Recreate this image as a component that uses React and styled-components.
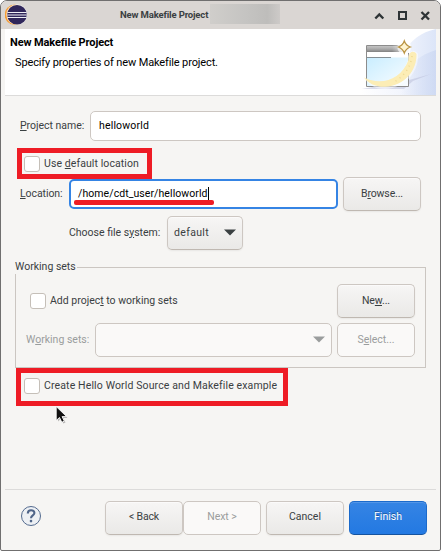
import React from "react";
import styled, { createGlobalStyle, css } from "styled-components";

const Global = createGlobalStyle`
  *, *::before, *::after { box-sizing: border-box; }
  html, body { margin: 0; height: 551px; overflow: hidden; background: #fff; }
  #root { height: 551px; }
`;

const Window = styled.main`
  position: relative;
  display: flex;
  flex-direction: column;
  width: 441px;
  height: 551px;
  border: 1px solid #706f6f;
  border-radius: 7px 7px 2px 2px;
  background: #f6f5f3;
  color: #3a4042;
  overflow: hidden;
  font: 10.5px/14px Roboto, sans-serif;
`;

const Text = styled.span`
  display: inline-block;
  white-space: nowrap;
  letter-spacing: ${(p) => p.$track ?? 0}px;
`;

const Key = styled.span`
  text-decoration: underline;
  text-decoration-thickness: 1px;
  text-underline-offset: 1px;
`;

const TitleBar = styled.header`
  flex: none;
  display: flex;
  align-items: center;
  height: 28px;
  padding-left: 4px;
  background: #dad6d3;
`;

const Title = styled.h1`
  margin: 0 0 0 92px;
  width: 90px;
  white-space: nowrap;
  font-size: 9.5px;
  line-height: 14px;
  font-weight: 700;
  letter-spacing: -0.15px;
`;

const Redacted = styled.div`
  width: 70px;
  height: 20px;
  margin: -2px 0 0;
  background: linear-gradient(90deg, #d0cecb, #c5c4c2 50%, #bebdbb 82%, #cdcac8);
`;

const WindowControls = styled.div`
  display: flex;
  margin: 1px 0 0 92px;
`;

const Banner = styled.section`
  flex: none;
  display: flex;
  justify-content: space-between;
  height: 67px;
  margin: 0 4px;
  background: #fff;
  border-bottom: 1px solid #dcdbda;
  color: #000;
`;

const BannerText = styled.div`
  padding: 7px 0 0 5px;
  font-size: 11px;
`;

const Heading = styled.h2`
  margin: 0;
  font-size: 11px;
  line-height: 14px;
  letter-spacing: -0.12px;
`;

const Description = styled.p`
  margin: 6px 0 0 5px;
  line-height: 14px;
  letter-spacing: -0.13px;
`;

const Form = styled.form`
  flex: 1;
  display: flex;
  flex-direction: column;
  align-items: flex-start;
  padding: 15px 14px 0;
`;

const FormRow = styled.div`
  display: flex;
  align-items: center;
  height: ${(p) => p.$height}px;
  padding-left: ${(p) => p.$indent ?? 0}px;
  margin-top: ${(p) => p.$top ?? 0}px;
`;

const Label = styled.label`
  flex: none;
  width: ${(p) => p.$width}px;
  padding-bottom: 1px;
  color: ${(p) => (p.$disabled ? "#9a9d9d" : "inherit")};
`;

const Field = styled.div`
  display: flex;
  align-items: center;
  width: ${(p) => p.$width}px;
  height: 30px;
  padding: 0 0 1px ${(p) => (p.$focused ? 7 : 8)}px;
  border: ${(p) => (p.$focused ? "2px solid #3584e4" : "1px solid #cdc7c2")};
  border-radius: 5px;
  background: #fff;
  color: #000;
`;

const Underlined = styled.span`
  position: relative;
  display: flex;
  align-items: center;
  &::after {
    content: "";
    position: absolute;
    left: -4px;
    top: 13px;
    width: 140px;
    height: 5px;
    border-radius: 2px;
    background: #ee1c25;
  }
`;

const Caret = styled.i`
  width: 1px;
  height: 13px;
  background: #000;
`;

const Button = styled.button`
  flex: none;
  display: flex;
  align-items: center;
  justify-content: ${(p) => (p.$menu ? "space-between" : "center")};
  width: ${(p) => p.$width ?? 78}px;
  height: 34px;
  margin: 0 0 0 ${(p) => p.$left ?? 0}px;
  padding: 0 ${(p) => (p.$menu ? 6 : 0)}px 1px;
  border: 1px solid #cdc7c2;
  border-bottom-color: #bfb8b1;
  border-radius: 5px;
  background: linear-gradient(#f7f6f5, #f4f3f2 20%, #eae9e7);
  box-shadow: inset 0 1px #fbfafa, 0 1px 2px rgba(0, 0, 0, 0.06);
  color: #3a4042;
  font: inherit;
  ${(p) => p.disabled && css`
    border-color: #cdc7c2;
    background: #faf9f8;
    box-shadow: none;
    color: #9a9d9d;
  `}
  ${(p) => p.$primary && css`
    border-color: #1b6acb;
    border-bottom-color: #15539e;
    background: linear-gradient(#3584e4, #2379e2);
    box-shadow: inset 0 1px #5396e8;
    color: #fff;
    text-shadow: 0 -1px rgba(0, 0, 0, 0.35);
  `}
`;

const CheckBox = styled.span`
  flex: none;
  width: 16px;
  height: 16px;
  margin-right: 4px;
  border: 1px solid #c5bfb8;
  border-radius: 3px;
  background: #fff;
`;

const CheckLabel = styled.label`
  display: flex;
  align-items: center;
  line-height: 15px;
`;

const Callout = styled.div`
  display: flex;
  align-items: center;
  width: ${(p) => p.$width}px;
  height: ${(p) => p.$height}px;
  margin: ${(p) => p.$margin};
  padding: 0 0 ${(p) => p.$bottom ?? 0}px ${(p) => p.$pad}px;
  border: 5px solid #ee1c25;
`;

const Group = styled.fieldset`
  width: 411px;
  height: 108px;
  margin: 10px 0 0;
  padding: 10px 10px 0;
  border: 1px solid #cbc6c1;
  min-width: 0;
`;

const Legend = styled.legend`
  margin-left: -11px;
  padding: 0 1px 0 0;
  line-height: 14px;
`;

const Push = styled.div`
  flex: 1;
`;

const GroupRow = styled.div`
  display: flex;
  align-items: center;
  height: 34px;
  margin-bottom: 5px;
  ${CheckLabel} {
    padding: 0 0 1px 4px;
  }
`;

const Footer = styled.footer`
  flex: none;
  display: flex;
  align-items: center;
  height: 61px;
  margin: 0 4px;
  padding: 0 9px 5px 15px;
  border-top: 1px solid #dcdbda;
`;

const HelpIcon = styled.svg`
  margin-bottom: 3px;
`;

const Pointer = styled.svg`
  position: absolute;
  left: 54px;
  top: 404px;
`;

const EclipseLogo = () => (
  <svg width="23" height="23" viewBox="0.6 0.9 23 23">
    <circle cx="10.5" cy="11.6" r="10.2" fill="#f59d35" />
    <circle cx="12.3" cy="11.6" r="10.4" fill="#fff" opacity=".7" />
    <circle cx="12.6" cy="11.6" r="9.8" fill="#30275b" />
    <path d="M3 9.4h19.200M2.8 11.900h19.600M3 14.400h19.200" stroke="#eeeef5" strokeWidth="1.2" />
  </svg>
);

const WizardArt = () => (
  <svg width="75" height="66" viewBox="0 0 75 66">
    <defs>
      <linearGradient id="sky" x2="1" y2="1">
        <stop stopColor="#c9edff" />
        <stop offset="1" stopColor="#fafdff" />
      </linearGradient>
      <linearGradient id="sweep">
        <stop stopColor="#fff" />
        <stop offset=".55" stopColor="#f2f5fd" />
        <stop offset="1" stopColor="#dce5f8" />
      </linearGradient>
      <linearGradient id="sweepLow">
        <stop stopColor="#ccd7f2" stopOpacity="0" />
        <stop offset="1" stopColor="#c6d3f0" />
      </linearGradient>
      <linearGradient id="bar" y2="1" x2="0">
        <stop stopColor="#c4c4c4" />
        <stop offset=".5" stopColor="#aaa" />
        <stop offset="1" stopColor="#808080" />
      </linearGradient>
      <linearGradient id="fade">
        <stop stopColor="#fff" stopOpacity="0" />
        <stop offset="1" stopColor="#fff" />
      </linearGradient>
      <filter id="soft" x="-20%" y="-20%" width="140%" height="140%">
        <feGaussianBlur stdDeviation=".7" />
      </filter>
    </defs>
    <path d="M75 0C60 3 49 12 43 23L30 58 0 59V66H75Z" fill="url(#sweep)" />
    <path d="M75 21C59 26 50 34 46 43L39 66H75Z" fill="url(#sweepLow)" opacity=".6" />
    <path d="M1 60 48 51 70 45 52 52 43 60Z" fill="#b9bdd8" opacity=".5" filter="url(#soft)" />
    <path d="M5.5 16.5H47.500V57.5H5.5Z" fill="#fff" stroke="#8c8c8c" />
    <path d="M6 17H47V23H6Z" fill="url(#bar)" />
    <path d="M31 16H49V24H31Z" fill="url(#fade)" />
    <path d="M6 28.5H47V57H6Z" fill="url(#sky)" />
    <path d="M6 28.5H30" stroke="#858f94" />
    <path d="M4 49C20 59 40 52 47 31C46 21 54 20 57 25C58 42 45 59 24 60C13 60 6 55 4 49Z" fill="#fff" opacity=".5" filter="url(#soft)" />
    <path d="M3 48.500C20 57 40 51 47.500 31C47 22 53 21 55.500 25C56 41 44 57 24 57.800C14 58 7 54 3 48.500Z" fill="#fcedb5" filter="url(#soft)" />
    <path d="M51 27Q49 43 34 52.500" fill="none" stroke="#eeda93" strokeWidth="1.5" strokeDasharray="1 4" />
    <circle cx="43.3" cy="18" r="7" fill="#fff" opacity=".65" filter="url(#soft)" />
    <path d="M43.3 12Q44.900 16.400 49.300 18Q44.900 19.600 43.300 24Q41.700 19.600 37.300 18Q41.700 16.400 43.300 12Z" fill="#fff4cf" stroke="#b99342" strokeWidth="1.3" />
  </svg>
);

const Arrow = () => (
  <svg width="12" height="7" viewBox="0 0 12 7">
    <path d="M0 .5H12L6 6.5Z" fill="currentColor" />
  </svg>
);

const Combo = styled(Button)`
  padding-right: 6px;
  justify-content: flex-end;
`;

export default function App() {
  return (
    <>
      <Global />
      <Window>
        <TitleBar>
          <EclipseLogo />
          <Title>New Makefile Project</Title>
          <Redacted />
          <WindowControls>
            <svg width="60" height="14" viewBox="0 0 60 14" fill="none" stroke="#2e3436" strokeWidth="2">
              <path d="M3.300 9.500 7.300 5.500 11.300 9.500" strokeWidth="2.4" />
              <path d="M27 3H34V10H27Z" />
              <path d="M49.500 3 57 10.500M57 3 49.500 10.500" strokeWidth="2.3" />
            </svg>
          </WindowControls>
        </TitleBar>
        <Banner>
          <BannerText>
            <Heading>New Makefile Project</Heading>
            <Description>Specify properties of new Makefile project.</Description>
          </BannerText>
          <WizardArt />
        </Banner>
        <Form>
          <FormRow $height={30} $indent={5}>
            <Label $width={70}><Text $track={-0.02}><Key>P</Key>roject name:</Text></Label>
            <Field $width={331}><Text $track={0.16}>helloworld</Text></Field>
          </FormRow>
          <Callout $width={135} $height={31} $margin="7px 0 0 2px" $pad={2}>
            <CheckLabel><CheckBox /><Text $track={0.09}>Use <Key>d</Key>efault location</Text></CheckLabel>
          </Callout>
          <FormRow $height={34} $indent={5} $top={-2}>
            <Label $width={49}><Text $track={-0.07}><Key>L</Key>ocation:</Text></Label>
            <Field $width={269} $focused>
              <Underlined><Text $track={0.07}>/home/cdt_user/helloworld</Text><Caret /></Underlined>
            </Field>
            <Button type="button" $left={5}><Text $track={-0.13}>B<Key>r</Key>owse...</Text></Button>
          </FormRow>
          <FormRow $height={34} $indent={54} $top={5}>
            <Label $width={98}><Text>Choose file s<Key>y</Key>stem:</Text></Label>
            <Button type="button" $width={76} $menu><Text $track={0.34}>default</Text><Arrow /></Button>
          </FormRow>
          <Group>
            <Legend><Text>Working sets</Text></Legend>
            <GroupRow>
              <CheckLabel><CheckBox /><Text>Add projec<Key>t</Key> to working sets</Text></CheckLabel>
              <Push />
              <Button type="button"><Text $track={-0.1}>Ne<Key>w</Key>...</Text></Button>
            </GroupRow>
            <GroupRow>
              <Label $width={69} $disabled><Text>W<Key>o</Key>rking sets:</Text></Label>
              <Combo type="button" disabled $width={237}><Arrow /></Combo>
              <Button type="button" disabled $left={5}><Text>S<Key>e</Key>lect...</Text></Button>
            </GroupRow>
          </Group>
          <Callout $width={272} $height={38} $margin="0 0 0 1px" $pad={3} $bottom={3}>
            <CheckLabel><CheckBox /><Text $track={0.13}>Create Hello World Source and Makefile example</Text></CheckLabel>
          </Callout>
        </Form>
        <Footer>
          <HelpIcon width="22" height="22" viewBox="0 0 22 22">
            <circle cx="11" cy="11" r="9.5" fill="#edf0f4" stroke="#546b8f" />
            <path d="M7.8 8.4C7.8 4.2 14.4 4.3 14.4 8.1C14.4 10.4 11 10.5 11 13.2" fill="none" stroke="#4f6589" strokeWidth="2.1" />
            <circle cx="11" cy="16.1" r="1.3" fill="#4f6589" />
          </HelpIcon>
          <Push />
          <Button type="button"><Text $track={-0.17}>&lt; Back</Text></Button>
          <Button type="button" disabled><Text $track={-0.05}>Next &gt;</Text></Button>
          <Button type="button" $left={5}><Text>Cancel</Text></Button>
          <Button type="button" $left={5} $primary><Text>Finish</Text></Button>
        </Footer>
        <Pointer width="15" height="20" viewBox="0 0 15 20">
          <path d="M2 2V15.5L5 12.8 7.3 17.5 9.5 16.4 7.4 12H11.5Z" fill="#000" opacity=".25" transform="translate(1 1)" />
          <path d="M1.2 1.5V15.5L4.5 12.5 6.8 17.3 9.3 16.1 7.1 11.6H11.6Z" fill="#111" stroke="#fff" strokeWidth=".9" />
        </Pointer>
      </Window>
    </>
  );
}
